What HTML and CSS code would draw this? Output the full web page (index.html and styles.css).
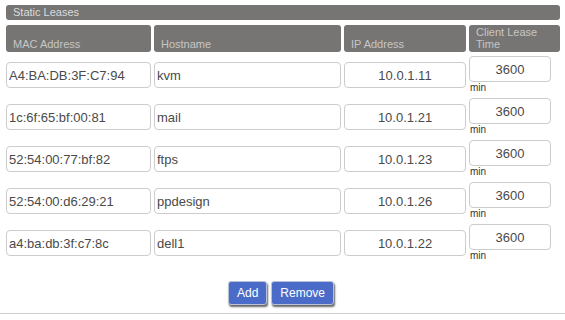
FILE: index.html
```html
<!DOCTYPE html>
<html lang="en">
<head>
    <meta charset="UTF-8">
    <meta name="viewport" content="width=device-width, initial-scale=1.0">
    <title>Static Leases</title>
    <link rel="stylesheet" href="styles.css">
</head>
<body>
    <div class="leases">
        <div class="titulo">Static Leases</div>

        <div class="grade">
            <div class="cab">MAC Address</div>
            <div class="cab">Hostname</div>
            <div class="cab">IP Address</div>
            <div class="cab">Client Lease Time</div>

            <input class="campo" type="text" value="A4:BA:DB:3F:C7:94">
            <input class="campo" type="text" value="kvm">
            <input class="campo centro" type="text" value="10.0.1.11">
            <div class="tempo"><input class="campo centro curto" type="text" value="3600"><span>min</span></div>

            <input class="campo" type="text" value="1c:6f:65:bf:00:81">
            <input class="campo" type="text" value="mail">
            <input class="campo centro" type="text" value="10.0.1.21">
            <div class="tempo"><input class="campo centro curto" type="text" value="3600"><span>min</span></div>

            <input class="campo" type="text" value="52:54:00:77:bf:82">
            <input class="campo" type="text" value="ftps">
            <input class="campo centro" type="text" value="10.0.1.23">
            <div class="tempo"><input class="campo centro curto" type="text" value="3600"><span>min</span></div>

            <input class="campo" type="text" value="52:54:00:d6:29:21">
            <input class="campo" type="text" value="ppdesign">
            <input class="campo centro" type="text" value="10.0.1.26">
            <div class="tempo"><input class="campo centro curto" type="text" value="3600"><span>min</span></div>

            <input class="campo" type="text" value="a4:ba:db:3f:c7:8c">
            <input class="campo" type="text" value="dell1">
            <input class="campo centro" type="text" value="10.0.1.22">
            <div class="tempo"><input class="campo centro curto" type="text" value="3600"><span>min</span></div>
        </div>

        <div class="botoes">
            <button class="botao">Add</button>
            <button class="botao">Remove</button>
        </div>
    </div>
    <div class="linha"></div>
</body>
</html>
```

FILE: styles.css
```css
body {
    margin: 0;
    font-family: "Liberation Sans", Arial, sans-serif;
    background-color: #fff;
}

.leases {
    width: 554px;
    padding: 5px 0 0 6px;
}

.titulo {
    height: 15px;
    line-height: 15px;
    padding-left: 7px;
    font-size: 11px;
    color: #dcdcdc;
    background-color: #777573;
    border-radius: 3px;
}

.grade {
    display: grid;
    grid-template-columns: 145px 187px 122px 91px;
    column-gap: 3px;
    row-gap: 4px;
    align-items: center;
    margin-top: 5px;
}

.cab {
    align-self: stretch;
    height: 27px;
    box-sizing: border-box;
    display: flex;
    align-items: flex-end;
    padding: 0 7px 2px;
    font-size: 11px;
    line-height: 12px;
    color: #c6c6c6;
    background-color: #777573;
    border-radius: 3px;
}

.campo {
    width: 100%;
    height: 26px;
    box-sizing: border-box;
    margin: 0;
    padding: 0 2px;
    font-family: "Liberation Sans", Arial, sans-serif;
    font-size: 13px;
    color: #4a4a4a;
    border: 1px solid #ccc;
    border-radius: 4px;
    background: #fff;
}

.centro {
    text-align: center;
}

.curto {
    width: 82px;
}

.tempo {
    display: flex;
    flex-direction: column;
    align-items: flex-start;
}

.tempo span {
    font-size: 10px;
    line-height: 12px;
    color: #333;
    padding-left: 1px;
}

.botoes {
    display: flex;
    justify-content: center;
    gap: 4px;
    margin-top: 19px;
    padding-right: 4px;
}

.botao {
    height: 24px;
    padding: 0 8px;
    font-family: "Liberation Sans", Arial, sans-serif;
    font-size: 12px;
    color: #fff;
    background-color: #4a6cc8;
    border: 1px solid #b9c1d8;
    border-radius: 3px;
    box-shadow: 1px 2px 2px #666;
}

.linha {
    margin-top: 8px;
    height: 1px;
    background-color: #ccc;
}
```
